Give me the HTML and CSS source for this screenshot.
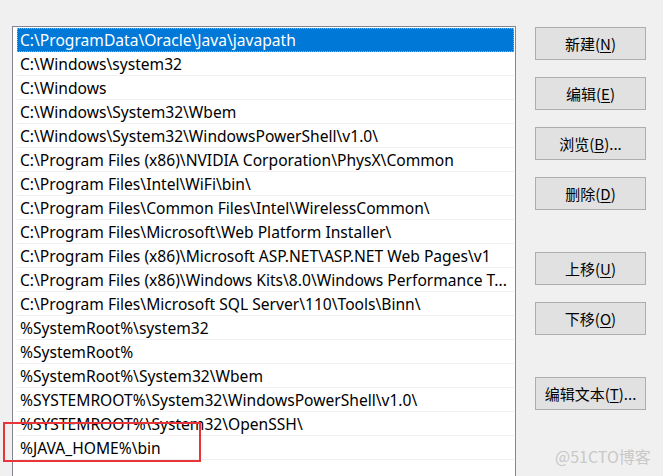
FILE: index.html
```html
<!DOCTYPE html>
<html lang="zh-CN">
<head>
<meta charset="utf-8">
<title>编辑环境变量</title>
<link rel="stylesheet" href="styles.css">
</head>
<body>
<div class="dialog">
  <div class="list">
    <div class="row selected">C:\ProgramData\Oracle\Java\javapath</div>
    <div class="row">C:\Windows\system32</div>
    <div class="row">C:\Windows</div>
    <div class="row">C:\Windows\System32\Wbem</div>
    <div class="row">C:\Windows\System32\WindowsPowerShell\v1.0\</div>
    <div class="row">C:\Program Files (x86)\NVIDIA Corporation\PhysX\Common</div>
    <div class="row">C:\Program Files\Intel\WiFi\bin\</div>
    <div class="row">C:\Program Files\Common Files\Intel\WirelessCommon\</div>
    <div class="row">C:\Program Files\Microsoft\Web Platform Installer\</div>
    <div class="row">C:\Program Files (x86)\Microsoft ASP.NET\ASP.NET Web Pages\v1</div>
    <div class="row">C:\Program Files (x86)\Windows Kits\8.0\Windows Performance T...</div>
    <div class="row">C:\Program Files\Microsoft SQL Server\110\Tools\Binn\</div>
    <div class="row">%SystemRoot%\system32</div>
    <div class="row">%SystemRoot%</div>
    <div class="row">%SystemRoot%\System32\Wbem</div>
    <div class="row">%SYSTEMROOT%\System32\WindowsPowerShell\v1.0\</div>
    <div class="row">%SYSTEMROOT%\System32\OpenSSH\</div>
    <div class="row">%JAVA_HOME%\bin</div>
    <div class="row"></div>
  </div>
  <div class="buttons">
    <div class="group">
      <button class="btn">新建(<u>N</u>)</button>
      <button class="btn">编辑(<u>E</u>)</button>
      <button class="btn">浏览(<u>B</u>)...</button>
      <button class="btn">删除(<u>D</u>)</button>
    </div>
    <div class="group">
      <button class="btn">上移(<u>U</u>)</button>
      <button class="btn">下移(<u>O</u>)</button>
    </div>
    <div class="group">
      <button class="btn">编辑文本(<u>T</u>)...</button>
    </div>
  </div>
</div>
<div class="highlight"></div>
<div class="watermark">@51CTO博客</div>
</body>
</html>
```

FILE: styles.css
```css
html, body {
  margin: 0;
  padding: 0;
  height: 476px;
  overflow: hidden;
}
body {
  background: #f0f0f0;
  font-family: "Noto Sans", "Noto Sans CJK SC", sans-serif;
  color: #000;
  position: relative;
}
.dialog {
  display: flex;
  align-items: flex-start;
  padding: 26px 0 0 12px;
  height: 476px;
  box-sizing: border-box;
  overflow: hidden;
}
.list {
  width: 504px;
  height: 452px;
  border: 1px solid #828790;
  border-bottom: none;
  background: #fff;
  padding: 1px 1px 0 4px;
  box-sizing: border-box;
  flex: none;
  overflow: hidden;
}
.row {
  height: 24px;
  line-height: 22px;
  padding-top: 1px;
  box-sizing: border-box;
  border-bottom: 1px solid #f0f0f0;
  padding-left: 3px;
  font-size: 15.6px;
  white-space: nowrap;
  overflow: hidden;
}
.row.selected {
  background: #0078d7;
  color: #fff;
  border: 1px dotted #f0a040;
  padding-top: 0;
  padding-left: 2px;
  line-height: 22px;
}
.buttons {
  margin-left: 19px;
  padding-top: 1px;
  display: flex;
  flex-direction: column;
  gap: 42px;
}
.group {
  display: flex;
  flex-direction: column;
  gap: 17px;
}
.btn {
  width: 111px;
  height: 33px;
  background: #e1e1e1;
  border: 1px solid #adadad;
  font-family: "Noto Sans CJK SC", "Noto Sans", sans-serif;
  font-size: 15px;
  color: #000;
  padding: 0;
  margin: 0;
}
.btn u {
  text-underline-offset: 2px;
}
.highlight {
  position: absolute;
  left: 3px;
  top: 422px;
  width: 198px;
  height: 40px;
  box-sizing: border-box;
  border: 2px solid #e8353a;
}
.watermark {
  position: absolute;
  left: 555px;
  top: 444px;
  font-family: "Noto Sans CJK SC", sans-serif;
  font-size: 16px;
  color: #c8c8c8;
}
```
